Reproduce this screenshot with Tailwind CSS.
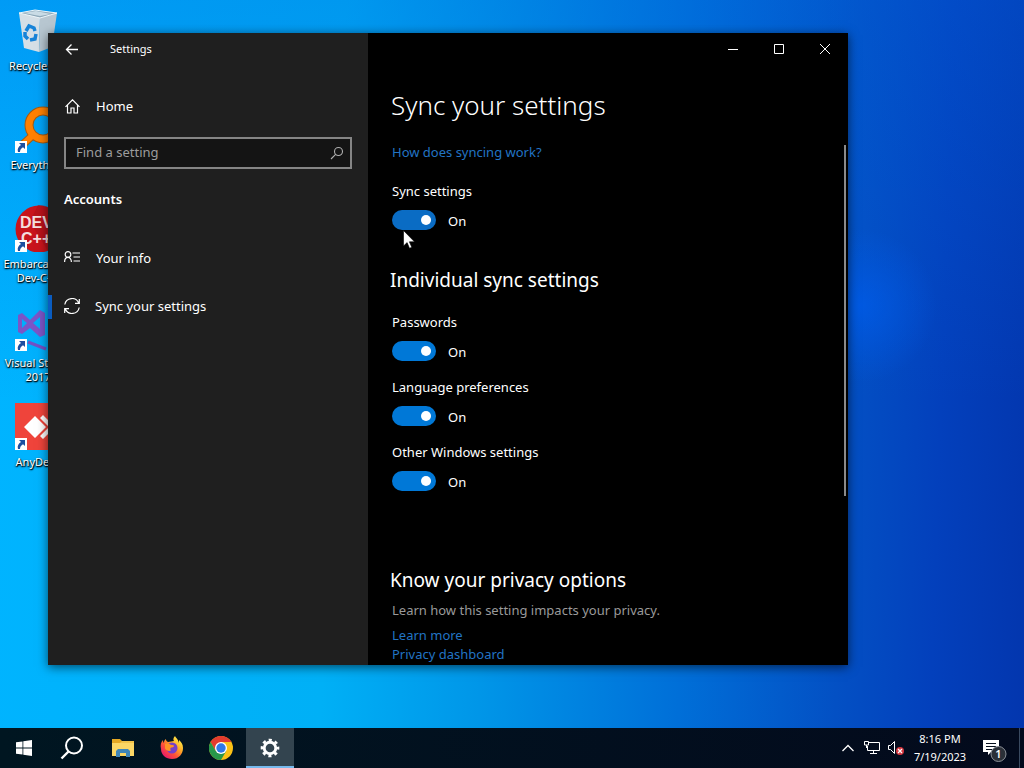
<!DOCTYPE html>
<html lang="en">
  <head>
    <meta charset="UTF-8" />
    <meta name="viewport" content="width=device-width, initial-scale=1.0" />
    <title>Settings</title>
    <script src="https://cdn.jsdelivr.net/npm/@tailwindcss/browser@4"></script>
  </head>
  <body class="flex h-screen flex-col overflow-hidden bg-[#0078e0] font-['Noto_Sans','Open_Sans',sans-serif] text-[13px] text-white">
    <!-- shortcut arrow shared by the desktop icons -->
    <svg class="hidden">
      <symbol id="shortcut" viewBox="0 0 12 12">
        <path fill="#fff" d="M0 0h12v12H0z" />
        <path fill="#1d4fa0" d="M4 2h6v6L8 6.200C6 7.500 5 8.500 5 11H3C2 8 3.500 5.500 6 4z" />
      </symbol>
    </svg>

    <main class="relative min-h-0 flex-1 bg-[radial-gradient(circle_at_84%_42%,#005ceac0_0,#005cea00_8%),linear-gradient(180deg,#0064e050_0%,#0064e000_55%),linear-gradient(92deg,#00b4ff_0%,#00b0f6_33%,#0096e8_48%,#006fd8_67%,#0350c4_82%,#0340bc_91%,#0336ae_100%)]">
      <!-- desktop icons -->
      <ul class="w-[76px] pt-1.5 text-center text-[11px] leading-[14px] [text-shadow:0_1px_2px_#000,1px_1px_1px_#000]">
        <li class="flex h-[99px] flex-col items-center gap-[5px]">
          <svg class="h-12 w-12 shrink-0" viewBox="0 0 48 48">
            <path fill="#d5dfe6" d="M5 7l21 4-1 35-15-4z" />
            <path fill="#b7c6d0" d="M26 11l17-4-5 34-13 5z" />
            <path fill="#8fa9b9" d="M5 7l16-3 22 3-17 5z" />
            <path fill="#c9dbe5" d="M10 7l12-2 15 3-11 2z" />
            <path fill="none" stroke="#eef6fa" d="M5 7l16-3 22 3-17 5z" />
            <g fill="none" stroke="#1683d8" stroke-width="3.500">
              <path d="M12 25l3-5 5 2 1 3" />
              <path d="M22 28l-1 5-5 1" />
              <path d="M14 33l-3-3v-4" />
            </g>
          </svg>
          <span>Recycle Bin</span>
        </li>
        <li class="flex h-[99px] flex-col items-center gap-[5px]">
          <svg class="h-12 w-12 shrink-0" viewBox="0 0 48 48">
            <path stroke="#a45a10" stroke-width="8" d="M5 43l13-12" />
            <circle cx="29" cy="20" r="14" fill="none" stroke="#a45a10" stroke-width="9" />
            <path stroke="#ff8000" stroke-width="6" d="M5 43l14-13" />
            <circle cx="29" cy="20" r="14" fill="none" stroke="#ff8000" stroke-width="7" />
            <use href="#shortcut" x="1" y="36" width="12" height="12" />
          </svg>
          <span>Everything</span>
        </li>
        <li class="flex h-[99px] flex-col items-center gap-[5px]">
          <svg class="h-12 w-12 shrink-0" viewBox="0 0 48 48">
            <circle cx="25" cy="25" r="23.500" fill="#c8141c" />
            <path fill="#a80f18" d="M24 1a24 24 0 0 1 10 46L16 18z" opacity=".5" />
            <text fill="#f4dede" class="font-['Liberation_Sans',sans-serif] text-[16px] font-bold [text-shadow:none]"><tspan x="6" y="24">DEV</tspan><tspan x="7" y="40">C++</tspan></text>
            <use href="#shortcut" x="1" y="36" width="12" height="12" />
          </svg>
          <span>Embarcadero Dev-C++</span>
        </li>
        <li class="flex h-[99px] flex-col items-center gap-[5px]">
          <svg class="h-12 w-12 shrink-0" viewBox="0 0 48 48">
            <path fill="#7b55c7" fill-rule="evenodd" d="M4 12l4-2 8 7L26 7l5 3v22l-5 2-10-9-8 6-4-2zM8 16v9l5-5zM26 14l-7 6 7 6z" />
            <path stroke="#7350c4" stroke-width="3" d="M14 39l18 7" />
            <use href="#shortcut" x="1" y="36" width="12" height="12" />
          </svg>
          <span>Visual Studio 2017</span>
        </li>
        <li class="flex h-[99px] flex-col items-center gap-[5px]">
          <svg class="h-12 w-12 shrink-0" viewBox="0 0 48 48">
            <path fill="#ef443b" d="M1 1h47v47H1z" />
            <path fill="#fff" d="M10 25l11-11 11 11-11 11zM26 16l3-3 12 12-12 12-3-3 9-9z" />
            <use href="#shortcut" x="1" y="36" width="12" height="12" />
          </svg>
          <span>AnyDesk</span>
        </li>
      </ul>

      <!-- settings window -->
      <div class="absolute top-[33px] right-44 bottom-[63px] left-12 flex bg-black shadow-[0_2px_10px_rgba(0,0,0,0.6)]">
        <aside class="flex w-80 shrink-0 flex-col bg-[#1f1f1f]">
          <header class="flex h-[33px] items-center text-[11px]">
            <button aria-label="Back" class="flex h-8 w-12 items-center justify-center">
              <svg class="h-4 w-4" viewBox="0 0 16 16" fill="none" stroke="currentColor" stroke-width="1.300">
                <path d="M14 7.500H2.500M7.500 2.500l-5 5 5 5" />
              </svg>
            </button>
            <h1 class="ml-3.5">Settings</h1>
          </header>
          <a href="#" class="mt-[17px] flex h-12 items-center gap-4 px-4">
            <svg class="h-4 w-4" viewBox="0 0 16 16" fill="none" stroke="currentColor" stroke-width="1.200">
              <path d="M1.500 7.800L8.500 .8l7 7M3.500 6v8h3.500V9h3v5h3.500v-8" />
            </svg>
            Home
          </a>
          <label class="mx-4 mt-1.5 flex h-8 items-center border-2 border-[#858585] bg-[#141414] pr-1.5 pl-2.5">
            <input type="text" placeholder="Find a setting" class="min-w-0 flex-1 bg-transparent outline-none placeholder:text-[#9d9d9d]" />
            <svg class="h-3.5 w-3.5" viewBox="0 0 14 14" fill="none" stroke="#b0b0b0" stroke-width="1.100">
              <circle cx="8.500" cy="5.500" r="4" />
              <path d="M5.600 8.400L1 13" />
            </svg>
          </label>
          <h2 class="mx-4 mt-3.5 h-8 leading-8 font-semibold">Accounts</h2>
          <nav class="mt-5">
            <a href="#" class="flex h-12 items-center gap-4 px-4">
              <svg class="mb-1 h-4 w-4" viewBox="0 0 16 16" fill="none" stroke="currentColor" stroke-width="1.200">
                <circle cx="4" cy="5.500" r="2.800" />
                <path d="M.6 13c0-6.200 6.800-6.200 6.800 0M8.500 4H16M9.500 8H16M9.500 12H16" />
              </svg>
              Your info
            </a>
            <a href="#" aria-current="page" class="flex h-12 items-center">
              <span class="h-6 w-1 bg-[#0a5cc0]"></span>
              <svg class="mr-[15px] mb-0.5 ml-3 h-4 w-4" viewBox="0 0 16 16" fill="none" stroke="currentColor" stroke-width="1.200">
                <path d="M.8 6.500A7.300 7.300 0 0 1 14.700 5M15.300 1v4.300H11M15.200 9.500A7.300 7.300 0 0 1 1.300 11M.7 15v-4.300H5" />
              </svg>
              Sync your settings
            </a>
          </nav>
        </aside>

        <section class="relative flex min-w-0 flex-1 flex-col">
          <div class="flex h-8 justify-end">
            <button aria-label="Minimize" class="flex w-[46px] items-center justify-center">
              <svg class="h-2.5 w-2.5" viewBox="0 0 10 10" stroke="currentColor"><path d="M0 5.500h10" /></svg>
            </button>
            <button aria-label="Maximize" class="flex w-[46px] items-center justify-center">
              <svg class="h-2.5 w-2.5" viewBox="0 0 10 10" fill="none" stroke="currentColor"><path d="M.5.5h9v9h-9z" /></svg>
            </button>
            <button aria-label="Close" class="flex w-[46px] items-center justify-center">
              <svg class="h-2.5 w-2.5" viewBox="0 0 10 10" stroke="currentColor"><path d="M0 0l10 10M10 0L0 10" /></svg>
            </button>
          </div>
          <div class="min-h-0 flex-1 overflow-hidden pl-6 leading-5">
            <h2 class="mt-5 -ml-px text-[26px] leading-10 font-[350]">Sync your settings</h2>
            <a href="#" class="mt-[17px] block text-[#2274c4]">How does syncing work?</a>

            <label for="sync" class="mt-[19px] block">Sync settings</label>
            <div class="mt-[9px] flex h-5 items-center gap-3">
              <input id="sync" type="checkbox" role="switch" checked class="flex h-5 w-11 appearance-none items-center justify-end rounded-full bg-[#0a6cc4] pr-[5px] before:h-2.5 before:w-2.5 before:rounded-full before:bg-white" />
              <span class="pt-0.5">On</span>
            </div>

            <h3 class="mt-9 -ml-0.5 text-[19px] leading-7">Individual sync settings</h3>

            <label for="passwords" class="mt-[18px] block">Passwords</label>
            <div class="mt-[9px] flex h-5 items-center gap-3">
              <input id="passwords" type="checkbox" role="switch" checked class="flex h-5 w-11 appearance-none items-center justify-end rounded-full bg-[#0078d7] pr-[5px] before:h-2.5 before:w-2.5 before:rounded-full before:bg-white" />
              <span class="pt-0.5">On</span>
            </div>

            <label for="language" class="mt-4 block">Language preferences</label>
            <div class="mt-[9px] flex h-5 items-center gap-3">
              <input id="language" type="checkbox" role="switch" checked class="flex h-5 w-11 appearance-none items-center justify-end rounded-full bg-[#0078d7] pr-[5px] before:h-2.5 before:w-2.5 before:rounded-full before:bg-white" />
              <span class="pt-0.5">On</span>
            </div>

            <label for="other" class="mt-4 block">Other Windows settings</label>
            <div class="mt-[9px] flex h-5 items-center gap-3">
              <input id="other" type="checkbox" role="switch" checked class="flex h-5 w-11 appearance-none items-center justify-end rounded-full bg-[#0078d7] pr-[5px] before:h-2.5 before:w-2.5 before:rounded-full before:bg-white" />
              <span class="pt-0.5">On</span>
            </div>

            <h3 class="mt-[75px] -ml-0.5 text-[19px] leading-7">Know your privacy options</h3>
            <p class="mt-1.5 text-[#9a9a9a]">Learn how this setting impacts your privacy.</p>
            <a href="#" class="mt-[5px] block text-[#2274c4]">Learn more</a>
            <a href="#" class="block leading-[19px] text-[#2274c4]">Privacy dashboard</a>
          </div>
          <!-- scroll thumb -->
          <div class="absolute top-28 right-0.5 h-[351px] w-0.5 bg-[#8a8a8a]"></div>
        </section>
      </div>

      <!-- mouse pointer -->
      <svg class="absolute top-[230px] left-[403px] h-[19px] w-3" viewBox="0 0 12 19">
        <path fill="#fff" stroke="#000" stroke-width=".6" d="M.5.5v15.500l3.600-3.400 2.400 5.700 2.300-1-2.400-5.500h5.100z" />
      </svg>
    </main>

    <!-- taskbar -->
    <footer class="flex h-10 shrink-0 items-stretch bg-linear-to-r from-[#001621] to-[#030a1c]">
      <button aria-label="Start" class="flex w-12 items-center justify-center">
        <svg class="h-4 w-4" viewBox="0 0 16 16" fill="#fff">
          <path d="M0 2.300L6.500 1.400v6.200H0zM7.300 1.300L16 0v7.600H7.300zM0 8.400h6.500v6.200L0 13.700zM7.300 8.400H16V16l-8.700-1.300z" />
        </svg>
      </button>
      <button aria-label="Search" class="flex w-12 items-center justify-center">
        <svg class="h-6 w-6" viewBox="0 0 24 24" fill="none" stroke="#fff" stroke-width="2">
          <circle cx="14" cy="9.500" r="8" />
          <path d="M8.500 15.500L1.500 22.500" stroke-width="2.400" />
        </svg>
      </button>
      <button aria-label="File Explorer" class="flex w-[50px] items-center justify-center">
        <svg class="ml-1 h-5 w-[22px]" viewBox="0 0 22 20">
          <path fill="#e5a823" d="M0 1h8l2 2h11v4H0z" />
          <path fill="#fcd765" d="M0 5h22v13H0z" />
          <path fill="#f3c44a" d="M0 5h8l2-2h12v2z" />
          <path fill="#3f86b8" d="M4 19v-6l2-2h10l2 2v6h-4v-4H8v4z" />
        </svg>
      </button>
      <button aria-label="Firefox" class="flex w-[50px] items-center justify-center">
        <svg class="ml-0.5 h-6 w-6" viewBox="0 0 24 24">
          <defs>
            <linearGradient id="fox" x1=".85" y1=".1" x2=".15" y2=".9">
              <stop offset="0" stop-color="#fff04a" />
              <stop offset=".35" stop-color="#ffa826" />
              <stop offset=".65" stop-color="#ff5138" />
              <stop offset="1" stop-color="#e8186c" />
            </linearGradient>
          </defs>
          <path fill="url(#fox)" d="M15 0c-2 2-2 4-1 5L8 6C6 5 6 4 6 3 4 4 4 6 4 7 3 6 3 5 3 4 1 6 0 9 1 13c0 6 5 10 11 10 7 0 11-5 11-11 0-4-2-6-4-8 0 1 0 2 0 3-1-4-3-5-4-7z" />
          <circle cx="12" cy="12" r="5.500" fill="#7640c8" />
          <path fill="#ff9325" d="M5 8c3-1 5 0 6 1 2 0 3 0 3 1s-2 1.500-3 1.500c-1 1-1 2 0 3-2 1-5 0-6-2z" />
        </svg>
      </button>
      <button aria-label="Chrome" class="flex w-[50px] items-center justify-center">
        <svg class="h-6 w-6" viewBox="0 0 24 24">
          <circle cx="12" cy="12" r="12" fill="#fbc116" />
          <path fill="#e33b2e" d="M1.600 6A12 12 0 0 1 22.400 6H12L6.800 15z" />
          <path fill="#28984a" d="M1.600 6A12 12 0 0 0 12 24l5.200-9H6.800z" />
          <circle cx="12" cy="12" r="6" fill="#fff" />
          <circle cx="12" cy="12" r="4.700" fill="#3079e8" />
        </svg>
      </button>
      <button aria-label="Settings" class="flex w-12 items-center justify-center border-b-2 border-[#76b9ed] bg-[#33444f] pt-0.5">
        <svg class="h-5 w-5" viewBox="0 0 18 18" fill="none" stroke="#fff">
          <circle cx="9" cy="9" r="5.200" stroke-width="2.600" />
          <circle cx="9" cy="9" r="7.200" stroke-width="2.400" stroke-dasharray="2.800 2.855" stroke-dashoffset="1.400" />
        </svg>
      </button>

      <div class="ml-auto flex items-center">
        <button aria-label="Show hidden icons" class="flex w-6 justify-center">
          <svg class="h-3 w-3" viewBox="0 0 12 12" fill="none" stroke="#fff" stroke-width="1.300"><path d="M.5 9L6 3.500 11.500 9" /></svg>
        </button>
        <button aria-label="Network" class="flex w-6 justify-center">
          <svg class="h-4 w-4" viewBox="0 0 16 16" fill="none" stroke="#fff">
            <path d="M5 2.500h10.500v8h-12V6M9.500 10.500v3M6 13.500h7M.5 1.500h4v3.500h-4zM2.500 5v3" />
          </svg>
        </button>
        <button aria-label="Volume" class="flex w-6 justify-center">
          <svg class="h-4 w-4" viewBox="0 0 16 16">
            <path fill="none" stroke="#fff" d="M.5 5.500h2l4-4v12l-4-4h-2z" />
            <circle cx="12" cy="11" r="4" fill="#d4373f" />
            <path stroke="#fff" stroke-width="1.200" d="M10 9l4 4M14 9l-4 4" />
          </svg>
        </button>
        <time datetime="2023-07-19T20:16" class="w-16 text-center text-[11px] leading-[18px]">8:16 PM<br />7/19/2023</time>
        <button aria-label="Notifications" class="flex h-10 w-12 items-center justify-center border-r border-[#3a4a60] pt-1 pr-0.5">
          <svg class="h-6 w-6" viewBox="0 0 24 24">
            <path fill="#fff" d="M0 2h16v12H8l-3 3v-3H0z" />
            <path stroke="#07101e" d="M3 5.500h10M3 8.500h10M3 11.500h6" />
            <circle cx="15.500" cy="16" r="7.500" fill="#2b3038" stroke="#8b9098" />
            <text x="15.500" y="20" fill="#fff" text-anchor="middle" class="text-[11px] font-semibold">1</text>
          </svg>
        </button>
        <span class="w-1"></span>
      </div>
    </footer>
  </body>
</html>
